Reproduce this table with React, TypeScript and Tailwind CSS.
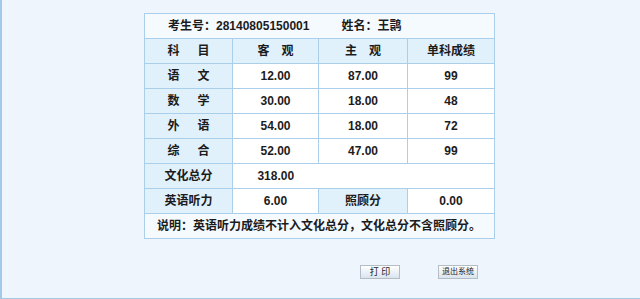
const subjects = [
  { name: ["语", "文"], objective: "12.00", subjective: "87.00", total: "99" },
  { name: ["数", "学"], objective: "30.00", subjective: "18.00", total: "48" },
  { name: ["外", "语"], objective: "54.00", subjective: "18.00", total: "72" },
  { name: ["综", "合"], objective: "52.00", subjective: "47.00", total: "99" },
];

function Pair({ a, b, gap }: { a: string; b: string; gap: string }) {
  return (
    <span className="inline-flex">
      <span className={gap}>{a}</span>
      <span>{b}</span>
    </span>
  );
}

const cell = "h-[25px] border border-[#a9cfeb] text-center p-0";
const head = `${cell} bg-[#e1f1fc]`;
const data = `${cell} bg-white`;

export default function App() {
  return (
    <div
      className="h-[299px] w-full bg-[#eef5fc] border-l-2 border-b border-[#a3c9e8] text-[#1c1c1c]"
      style={{ fontFamily: '"Liberation Sans", "Noto Sans CJK SC", sans-serif' }}
    >
      <div className="ml-[142px] w-[350px] pt-[13px]">
        <table className="w-[350px] table-fixed border-collapse text-[12px] font-bold">
          <colgroup>
            <col className="w-[88px]" />
            <col className="w-[86px]" />
            <col className="w-[89px]" />
            <col className="w-[87px]" />
          </colgroup>
          <tbody>
            <tr>
              <td colSpan={4} className={`${cell} bg-[#f5faff] text-left pl-[23px]`}>
                <span>考生号：28140805150001</span>
                <span className="ml-[32px]">姓名：王鹮</span>
              </td>
            </tr>
            <tr>
              <td className={head}>
                <Pair a="科" b="目" gap="mr-[18px]" />
              </td>
              <td className={head}>
                <Pair a="客" b="观" gap="mr-[12px]" />
              </td>
              <td className={head}>
                <Pair a="主" b="观" gap="mr-[12px]" />
              </td>
              <td className={head}>单科成绩</td>
            </tr>
            {subjects.map((s) => (
              <tr key={s.name.join("")}>
                <td className={head}>
                  <Pair a={s.name[0]} b={s.name[1]} gap="mr-[18px]" />
                </td>
                <td className={data}>{s.objective}</td>
                <td className={data}>{s.subjective}</td>
                <td className={data}>{s.total}</td>
              </tr>
            ))}
            <tr>
              <td className={head}>文化总分</td>
              <td className={`${data} border-r-0`}>318.00</td>
              <td colSpan={2} className={`${data} border-l-0`}></td>
            </tr>
            <tr>
              <td className={head}>英语听力</td>
              <td className={data}>6.00</td>
              <td className={head}>照顾分</td>
              <td className={data}>0.00</td>
            </tr>
            <tr>
              <td colSpan={4} className={`${cell} bg-[#f5faff] text-left pl-[12px]`}>
                说明：英语听力成绩不计入文化总分，文化总分不含照顾分。
              </td>
            </tr>
          </tbody>
        </table>

        <div className="mt-[26px] flex justify-end gap-[38px] pr-[16px]">
          <button className="h-[14px] w-[40px] border border-[#b4bcc6] bg-gradient-to-b from-white to-[#d9e4ef] text-[9px] leading-[12px] text-[#222]">
            打 印
          </button>
          <button className="h-[14px] w-[40px] border border-[#b4bcc6] bg-gradient-to-b from-white to-[#d9e4ef] text-[8px] leading-[12px] text-[#222]">
            退出系统
          </button>
        </div>
      </div>
    </div>
  );
}
